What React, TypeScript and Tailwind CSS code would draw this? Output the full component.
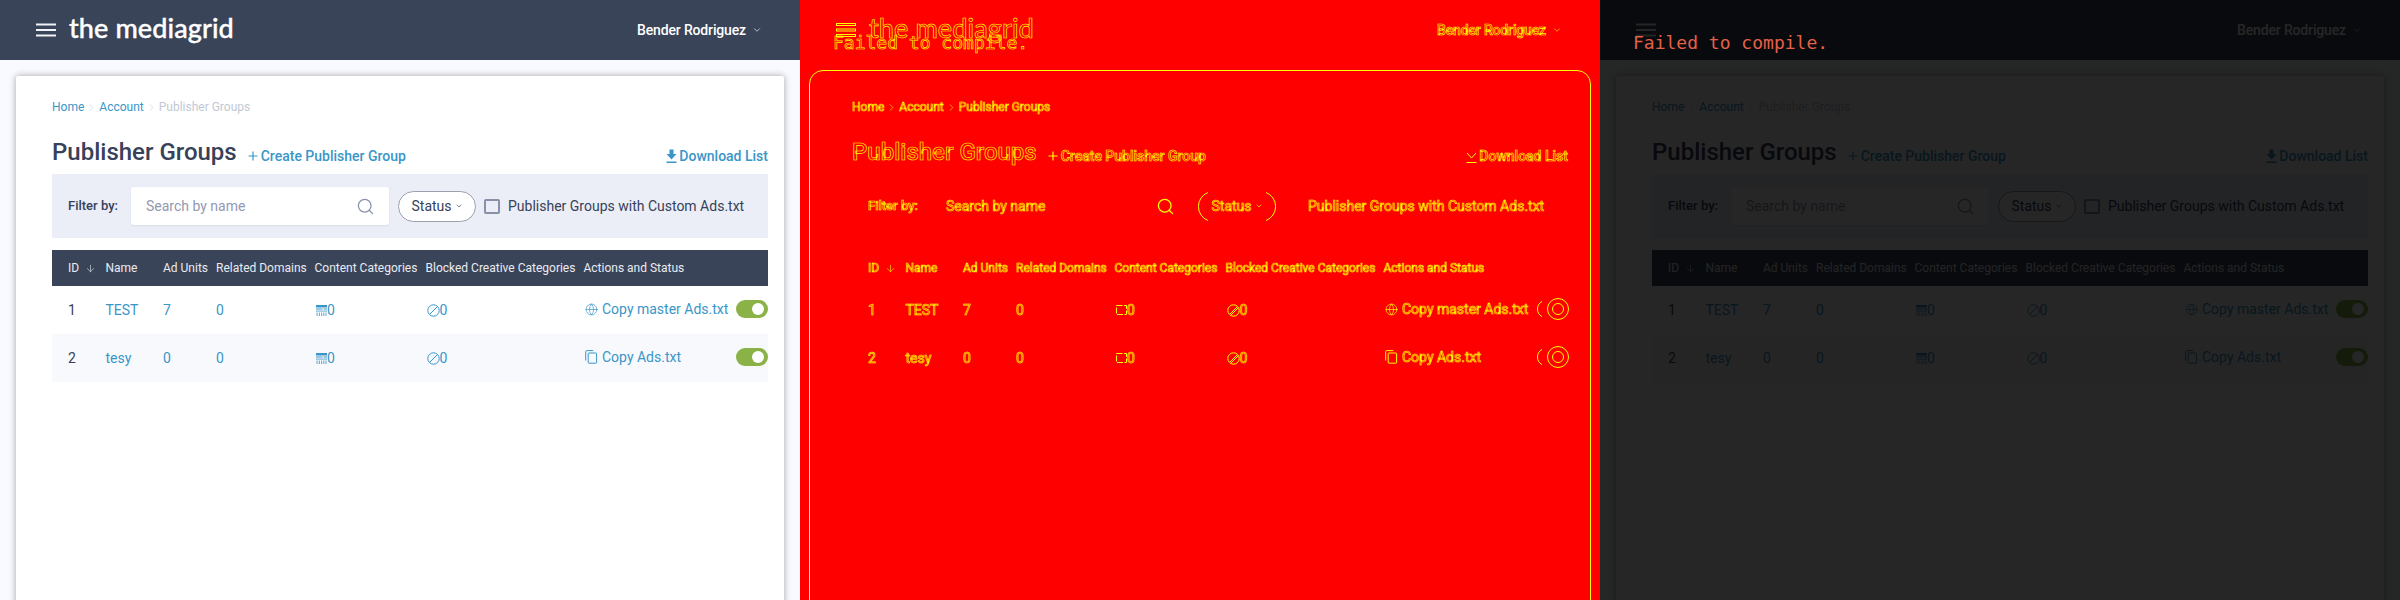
import clsx from 'clsx'
import { ArrowDown, ChevronDown, ChevronRight, Globe, Search } from 'lucide-react'

const ROWS = [
  { id: 1, name: 'TEST', adUnits: 7, action: 'Copy master Ads.txt', master: true },
  { id: 2, name: 'tesy', adUnits: 0, action: 'Copy Ads.txt', master: false },
]

const COLUMNS = 'grid grid-cols-[37.5px_57.5px_53px_98.5px_111px_158px_1fr] pl-4'

function Hamburger({ diff }: { diff: boolean }) {
  return (
    <svg width="20" height="14" viewBox="0 0 20 14" className="text-[#f2f3f6] shrink-0">
      {[0.5, 6, 11.5].map(y => (
        <rect key={y} x={diff ? 0.5 : 0} y={y} width={diff ? 19 : 20} height="2"
          fill={diff ? 'none' : 'currentColor'} stroke={diff ? 'currentColor' : 'none'} />
      ))}
    </svg>
  )
}

function PlusIcon() {
  return (
    <svg width="10" height="12" viewBox="0 0 10 12" className="shrink-0" fill="none" stroke="currentColor" strokeWidth="1.2">
      <path d="M5 1.5v9M.5 6h9" />
    </svg>
  )
}

function DownloadIcon({ diff }: { diff: boolean }) {
  if (diff) {
    return (
      <svg width="11" height="15" viewBox="0 0 11 15" className="shrink-0" fill="none" stroke="currentColor">
        <path d="M1 4l4.5 5L10 4M.5 13.5h10" />
      </svg>
    )
  }
  return (
    <svg width="11" height="15" viewBox="0 0 11 15" className="shrink-0" fill="currentColor">
      <path d="M3.5 0.5h4v4.5h3L5.5 10.5 .5 5h3zM.5 12.5h10v1.6H.5z" />
    </svg>
  )
}

function CategoryIcon({ diff }: { diff: boolean }) {
  if (diff) {
    return (
      <svg width="11" height="11" viewBox="0 0 11 11" className="shrink-0" fill="none" stroke="currentColor">
        <rect x=".5" y=".5" width="10" height="9" strokeDasharray="6 1.5" />
      </svg>
    )
  }
  return (
    <svg width="11" height="11" viewBox="0 0 11 11" className="shrink-0" fill="currentColor">
      <path d="M0 0h11v2.6H0zM0 3.6h6.5v1H0zM7.5 3.6H11v1H7.5z" />
      <path d="M0 5.6h11v1H0z" opacity=".8" />
      <path d="M.5 7.6h1.2V11H.5zM2.8 7.6H4V11H2.8zM5 7.6h1.2V11H5zM7.2 7.6h1.2V11H7.2zM9.4 7.6h1.2V11H9.4z" opacity=".7" />
    </svg>
  )
}

function BlockIcon({ diff }: { diff: boolean }) {
  return (
    <svg width="13" height="13" viewBox="0 0 13 13" className="shrink-0" fill="none" stroke="currentColor">
      <circle cx="6.5" cy="6.5" r="5.7" />
      <path d="M2.6 10.4 10.4 2.6" />
      {diff && <path d="M4 11l7-7" />}
    </svg>
  )
}

function CopyIcon() {
  return (
    <svg width="13" height="14" viewBox="0 0 13 14" className="shrink-0" fill="none" stroke="currentColor">
      <path d="M.7 10.5V1.6q0-1 1-1h6.6" />
      <rect x="3.2" y="3" width="8.4" height="10.2" rx=".8" />
    </svg>
  )
}

// rounded end of a pill, as the edge image draws it
function Arc({ height, flip = false }: { height: number; flip?: boolean }) {
  const r = height / 2 - 0.5
  const w = Math.round(height / 3)
  return (
    <svg width={w} height={height} viewBox={`0 0 ${w} ${height}`} className={clsx('shrink-0', flip && '-scale-x-100')} fill="none" stroke="currentColor">
      <path d={`M${w} 1.5A${r} ${r} 0 0 0 ${w} ${height - 1.5}`} />
    </svg>
  )
}

function Toggle({ diff }: { diff: boolean }) {
  return (
    <div className={clsx(
      'w-8 h-[18px] rounded-full flex items-center pr-1 shrink-0',
      diff ? 'justify-between' : 'justify-end bg-[#8ab246]',
    )}>
      {diff && <Arc height={18} />}
      <div className={clsx(
        'size-3 rounded-full bg-white',
        diff && 'border border-[#ff0] outline outline-1 outline-offset-[4px] outline-[#ff0]',
      )} />
    </div>
  )
}

function Page({ diff = false, logo = true }: { diff?: boolean; logo?: boolean }) {
  return (
    <>
      <header className="h-[60px] bg-[#3a4459] flex items-center pl-9 pr-[38px] text-white">
        <Hamburger diff={diff} />
        {logo && (
          <span className={clsx(
            "ml-[13px] font-['Lato',sans-serif] font-medium text-[27px] leading-none -mt-[6px] tracking-[0.1px] whitespace-nowrap",
            !diff && '[-webkit-text-stroke:0.4px_#ffffff]',
          )}>
            the mediagrid
          </span>
        )}
        <div className="ml-auto flex items-center gap-[6px] text-sm font-medium tracking-[-0.15px]">
          Bender Rodriguez
          <ChevronDown size={10} strokeWidth={1.5} />
        </div>
      </header>

      <div className="relative mx-4 mt-4 h-[600px] rounded-[2px] bg-white pl-9 pr-4 pt-[23px] shadow-[0_0_7px_rgba(0,0,0,0.35)]">
        {/* Breadcrumb */}
        <nav className="h-4 flex items-center gap-[2px] text-xs leading-4 text-[#3a96c8]">
          <span>Home</span>
          <ChevronRight size={11} strokeWidth={1.3} className="text-[#c3c8d4]" />
          <span>Account</span>
          <ChevronRight size={11} strokeWidth={1.3} className="text-[#c3c8d4]" />
          <span className="text-[#c3c8d4]">Publisher Groups</span>
        </nav>

        {/* Title */}
        <div className="mt-[21px] h-8 flex items-baseline">
          <h1 className="text-2xl leading-8 font-medium text-[#374159]">Publisher Groups</h1>
          <a className="ml-[11px] flex items-center gap-[3px] text-sm font-medium text-[#3a96c8] self-end mb-[2px]">
            <PlusIcon /> Create Publisher Group
          </a>
          <a className="ml-auto flex items-center gap-[2px] text-sm font-medium text-[#3a96c8] self-end mb-[2px]">
            <DownloadIcon diff={diff} /> Download List
          </a>
        </div>

        {/* Filter bar */}
        <div className="mt-[6px] h-16 bg-[#ebeef6] flex items-center pl-4 text-sm text-[#374159]">
          <span className="w-[63px] shrink-0 text-[13px] font-medium">Filter by:</span>
          <div className="w-[258px] h-[38px] shrink-0 rounded-[3px] bg-white shadow-[0_1px_2px_rgba(58,68,89,0.1)] flex items-center justify-between pl-[15px] pr-[14px] text-[#9299b2]">
            <span className="text-[14px]">Search by name</span>
            <Search size={19} strokeWidth={1.6} className="text-[#8a92ab]" />
          </div>
          <div className={clsx(
            'ml-[9px] w-[78px] h-[31px] shrink-0 rounded-full flex items-center bg-white',
            diff ? 'justify-between' : 'justify-center border border-[#9ba0ae]',
          )}>
            {diff && <Arc height={31} />}
            <span className="flex items-center gap-[3px]">
              Status
              <ChevronDown size={8} strokeWidth={2} />
            </span>
            {diff && <Arc height={31} flip />}
          </div>
          <div className={clsx(
            'ml-2 w-4 h-[15px] shrink-0 rounded-[2px] bg-[#ebeef6]',
            !diff && 'border-2 border-[#8a90a8]',
          )} />
          <span className="ml-2 whitespace-nowrap">Publisher Groups with Custom Ads.txt</span>
        </div>

        {/* Table */}
        <div className={clsx(COLUMNS, 'mt-3 h-9 items-center bg-[#3a4459] text-xs text-[#e9ebf1] whitespace-nowrap')}>
          <span className="flex items-center gap-[6px]">ID <ArrowDown size={11} strokeWidth={1.3} /></span>
          <span>Name</span>
          <span>Ad Units</span>
          <span>Related Domains</span>
          <span>Content Categories</span>
          <span>Blocked Creative Categories</span>
          <span>Actions and Status</span>
        </div>
        {ROWS.map((row, i) => (
          <div key={row.id} className={clsx(COLUMNS, 'h-12 items-center text-sm text-[#3a96c8]', i % 2 === 1 && 'bg-[#f8f9fd]')}>
            <span className="text-[#374159]">{row.id}</span>
            <span>{row.name}</span>
            <span>{row.adUnits}</span>
            <span>0</span>
            <span className="flex items-center pl-[1.5px]"><CategoryIcon diff={diff} />0</span>
            <span className="flex items-center pl-[1px]"><BlockIcon diff={diff} />0</span>
            <div className="flex items-center -mt-[2px] whitespace-nowrap">
              <span className="w-[18.5px] pl-[1px] shrink-0">
                {row.master ? <Globe size={13} strokeWidth={1.3} /> : <CopyIcon />}
              </span>
              {row.action}
              <div className="ml-auto"><Toggle diff={diff} /></div>
            </div>
          </div>
        ))}
      </div>
    </>
  )
}

function CompileError() {
  return (
    <div className="absolute left-0 top-0 w-full pl-[33px] pt-[31px] font-['DejaVu_Sans_Mono',monospace] text-[18px] leading-6 text-[#e36049]">
      Failed to compile.
    </div>
  )
}

export default function App() {
  return (
    <div className="flex w-[2400px] h-[600px] overflow-hidden font-['Roboto',sans-serif]">
      {/* original */}
      <div className="relative w-[800px] h-[600px] shrink-0 overflow-hidden bg-[#f9faff]">
        <Page />
      </div>

      {/* diff */}
      <div className="relative w-[800px] h-[600px] shrink-0 overflow-hidden bg-[#ff0000] text-transparent [-webkit-text-stroke:0.65px_#ff0] [&_*]:!text-transparent [&_*]:!bg-transparent [&_*]:!shadow-none [&_svg]:!text-[#ff0] [&_svg_*]:!text-[#ff0]">
        <Page diff />
        <div className="absolute left-[9px] right-[9px] top-[70px] h-[560px] rounded-[14px] border border-[#ff0]" />
        <CompileError />
      </div>

      {/* error overlay */}
      <div className="relative w-[800px] h-[600px] shrink-0 overflow-hidden bg-[#f9faff]">
        <Page logo={false} />
        <div className="absolute inset-0 bg-black/85" />
        <CompileError />
      </div>
    </div>
  )
}
